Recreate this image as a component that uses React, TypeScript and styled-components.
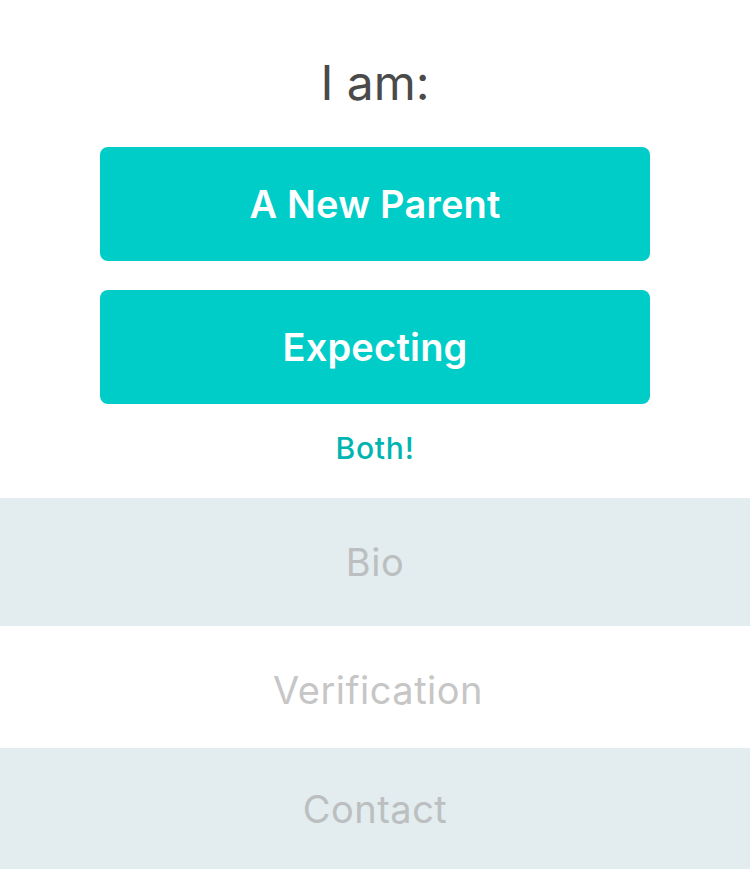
import React from "react";
import styled, { createGlobalStyle } from "styled-components";

const GlobalStyle = createGlobalStyle`
  html, body {
    margin: 0;
    padding: 0;
    background: #ffffff;
    font-family: Inter, "Noto Sans", "Liberation Sans", sans-serif;
    -webkit-font-smoothing: antialiased;
  }
`;

const Page = styled.div`
  display: flex;
  flex-direction: column;
  width: 750px;
`;

const Chooser = styled.section`
  display: flex;
  flex-direction: column;
  align-items: center;
  padding: 54px 100px 32px;
`;

const Title = styled.h1`
  margin: 0 0 35px;
  font-size: 48px;
  line-height: 58px;
  font-weight: 400;
  color: #4a4a4a;
`;

const Options = styled.div`
  display: flex;
  flex-direction: column;
  gap: 29px;
  width: 100%;
`;

const OptionButton = styled.button`
  display: flex;
  align-items: center;
  justify-content: center;
  height: 114px;
  width: 100%;
  border: none;
  border-radius: 8px;
  background: #00cdc8;
  color: #ffffff;
  font-family: inherit;
  font-size: 38px;
  font-weight: 600;
  letter-spacing: 0.2px;
  cursor: pointer;
`;

const LinkButton = styled.button`
  margin-top: 26px;
  border: none;
  background: none;
  padding: 0;
  font-family: inherit;
  font-size: 30px;
  line-height: 36px;
  font-weight: 500;
  letter-spacing: 0.8px;
  color: #00b5b1;
  cursor: pointer;
`;

const Section = styled.div<{ $h: number; $shaded: boolean; $dx: number; $dy: number }>`
  display: flex;
  align-items: center;
  justify-content: center;
  box-sizing: border-box;
  height: ${(p) => p.$h}px;
  padding-left: ${(p) => p.$dx}px;
  padding-top: ${(p) => p.$dy}px;
  background: ${(p) => (p.$shaded ? "#e3ecee" : "#ffffff")};
  color: ${(p) => (p.$shaded ? "#bcbfc0" : "#c6c6c6")};
  font-size: 38px;
  font-weight: 400;
  letter-spacing: 0.5px;
`;

const sections = [
  { label: "Bio", h: 128, shaded: true, dx: 0, dy: 0 },
  { label: "Verification", h: 122, shaded: false, dx: 6, dy: 5 },
  { label: "Contact", h: 121, shaded: true, dx: 0, dy: 0 },
];

export default function App() {
  return (
    <>
      <GlobalStyle />
      <Page>
        <Chooser>
          <Title>I am:</Title>
          <Options>
            <OptionButton>A New Parent</OptionButton>
            <OptionButton>Expecting</OptionButton>
          </Options>
          <LinkButton>Both!</LinkButton>
        </Chooser>
        {sections.map((s) => (
          <Section key={s.label} $h={s.h} $shaded={s.shaded} $dx={s.dx} $dy={s.dy}>
            {s.label}
          </Section>
        ))}
      </Page>
    </>
  );
}
